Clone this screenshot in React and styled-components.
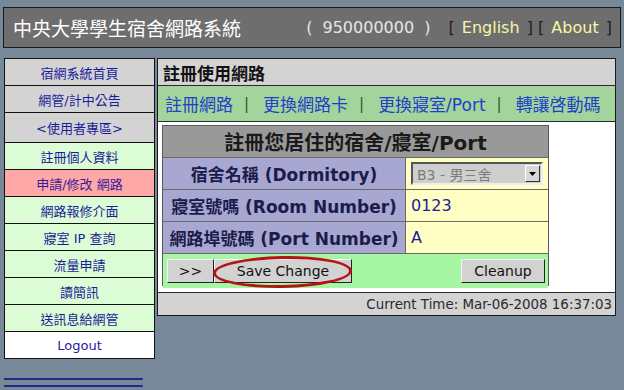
import React from "react";
import styled, { createGlobalStyle } from "styled-components";

const GlobalStyle = createGlobalStyle`
  body {
    margin: 0;
    background: #778899;
    font-family: "DejaVu Sans", "Noto Sans CJK TC", sans-serif;
  }
`;

const Page = styled.div`
  width: 624px;
  height: 390px;
  padding: 7px 3px 0 3px;
  box-sizing: border-box;
  overflow: hidden;
`;

const Header = styled.div`
  height: 41px;
  box-sizing: border-box;
  background: #6e6e6e;
  border: 1px solid #1a1a1a;
  display: flex;
  align-items: center;
  justify-content: space-between;
  padding: 0 8px 0 9px;
`;

const SiteTitle = styled.div`
  color: #ffffff;
  font-size: 19px;
`;

const HeaderRight = styled.div`
  display: flex;
  align-items: center;
  gap: 18px;
  font-size: 16px;
`;

const UserId = styled.span`
  color: #e6e6e6;
  word-spacing: 5px;
`;

const Bracket = styled.span`
  color: #1e1e1e;
`;

const TopLink = styled.span`
  color: #f6f6a8;
  margin: 0 2px;
`;

const Body = styled.div`
  display: flex;
  align-items: flex-start;
  gap: 2px;
  margin-top: 10px;
  margin-left: 1px;
`;

const SideColumn = styled.div`
  width: 151px;
  display: flex;
  flex-direction: column;
`;

const Sidebar = styled.div`
  border: 1px solid #111;
  border-bottom: none;
  background: #fff;
`;

const SideItem = styled.div`
  height: ${(p) => (p.tall ? 29 : 26)}px;
  border-bottom: 1px solid #111;
  background: ${(p) => p.bg};
  color: ${(p) => p.color || "#1c1c9a"};
  font-size: 13px;
  display: flex;
  align-items: center;
  justify-content: center;
`;

const Rule = styled.div`
  width: 139px;
  height: 2px;
  background: #1c2c8c;
  border-radius: 0 2px 2px 0;
  margin-top: ${(p) => p.top}px;
`;

const Main = styled.div`
  width: 459px;
  box-sizing: border-box;
  border: 1px solid #1a1a1a;
  background: #fff;
  display: flex;
  flex-direction: column;
`;

const PanelTitle = styled.div`
  height: 26px;
  background: #d3d3d3;
  border-bottom: 1px solid #2a2a2a;
  font-size: 17px;
  font-weight: bold;
  color: #111;
  display: flex;
  align-items: center;
  padding-left: 5px;
`;

const Nav = styled.div`
  height: 35px;
  background: #a3d49c;
  border-bottom: 1px solid #2a2a2a;
  display: flex;
  align-items: center;
  padding-left: 7px;
  font-size: 17px;
`;

const NavLink = styled.span`
  color: #2040c8;
`;

const Sep = styled.span`
  color: #2c5a2c;
  font-size: 15px;
  margin: 0 14px 0 11px;
`;

const Content = styled.div`
  height: 170px;
  padding: 3px 4px;
  box-sizing: border-box;
`;

const Form = styled.div`
  display: grid;
  grid-template-columns: 242px 142px;
  grid-auto-rows: 31px;
  gap: 1px;
  width: 387px;
  box-sizing: border-box;
  border: 1px solid #5a5a5a;
  background: #6a6a6a;
`;

const FormHead = styled.div`
  grid-column: 1 / 3;
  background: #999999;
  color: #1a1a1a;
  font-size: 20px;
  font-weight: bold;
  display: flex;
  align-items: center;
  justify-content: center;
`;

const Label = styled.div`
  background: #a7a7d2;
  color: #1c1c4a;
  font-size: 17px;
  font-weight: bold;
  display: flex;
  align-items: center;
  justify-content: center;
  white-space: nowrap;
`;

const Value = styled.div`
  background: #ffffc4;
  color: #1c1c9a;
  font-size: 16px;
  display: flex;
  align-items: center;
  padding-left: 5px;
`;

const Select = styled.div`
  width: 132px;
  height: 23px;
  box-sizing: border-box;
  border: 2px solid;
  border-color: #555 #eee #eee #555;
  background: #cfcfcf;
  color: #7c7c7c;
  font-size: 14px;
  display: flex;
  align-items: center;
  justify-content: space-between;
  padding-left: 4px;
`;

const SelectArrow = styled.div`
  width: 15px;
  height: 17px;
  box-sizing: border-box;
  background: #d8d8d8;
  border: 1px solid;
  border-color: #fff #333 #333 #fff;
  display: flex;
  align-items: center;
  justify-content: center;
  margin-right: 1px;
`;

const ButtonRow = styled.div`
  grid-column: 1 / 3;
  height: 34px;
  background: #a6f6a4;
  display: flex;
  align-items: center;
  padding: 0 3px 0 4px;
`;

const Button = styled.div`
  position: relative;
  height: 24px;
  width: ${(p) => p.w}px;
  box-sizing: border-box;
  background: #d2d2d2;
  border: 1px solid;
  border-color: #f4f4f4 #222 #222 #f4f4f4;
  color: #111;
  font-size: 14px;
  display: flex;
  align-items: center;
  justify-content: center;
  margin-left: ${(p) => (p.right ? "auto" : "0")};
`;

const Circle = styled.span`
  position: absolute;
  top: -4px;
  bottom: -6px;
  left: -2px;
  right: -1px;
  border: 3px solid #b41414;
  border-radius: 50%;
  transform: rotate(-1deg);
`;

const Footer = styled.div`
  height: 22px;
  border-top: 1px solid #2a2a2a;
  background: #d3d3d3;
  color: #2a2a2a;
  font-size: 13.4px;
  display: flex;
  align-items: center;
  justify-content: flex-end;
  padding-right: 3px;
`;

const sideItems = [
  { text: "宿網系統首頁", bg: "#d3d3d3" },
  { text: "網管/計中公告", bg: "#d3d3d3" },
  { text: "<使用者專區>", bg: "#d3d3d3", tall: true },
  { text: "註冊個人資料", bg: "#dbfcd4" },
  { text: "申請/修改 網路", bg: "#ffa8a8", color: "#3a1a9a" },
  { text: "網路報修介面", bg: "#dbfcd4" },
  { text: "寢室 IP 查詢", bg: "#dbfcd4" },
  { text: "流量申請", bg: "#dbfcd4" },
  { text: "讀簡訊", bg: "#dbfcd4" },
  { text: "送訊息給網管", bg: "#dbfcd4" },
  { text: "Logout", bg: "#ffffff", color: "#2a1a9a" },
];

const navLinks = ["註冊網路", "更換網路卡", "更換寢室/Port", "轉讓啓動碼"];

const App = () => {
  return (
    <Page>
      <GlobalStyle />
      <Header>
        <SiteTitle>中央大學學生宿舍網路系統</SiteTitle>
        <HeaderRight>
          <UserId>( 950000000 )</UserId>
          <span>
            <Bracket>[</Bracket> <TopLink>English</TopLink>{" "}
            <Bracket>]</Bracket> <Bracket>[</Bracket>{" "}
            <TopLink>About</TopLink> <Bracket>]</Bracket>
          </span>
        </HeaderRight>
      </Header>
      <Body>
        <SideColumn>
          <Sidebar>
            {sideItems.map((item) => (
              <SideItem
                key={item.text}
                bg={item.bg}
                color={item.color}
                tall={item.tall}
              >
                {item.text}
              </SideItem>
            ))}
          </Sidebar>
          <Rule top={19} />
          <Rule top={5} />
        </SideColumn>
        <Main>
          <PanelTitle>註冊使用網路</PanelTitle>
          <Nav>
            {navLinks.map((link, i) => (
              <React.Fragment key={link}>
                {i > 0 && <Sep>|</Sep>}
                <NavLink>{link}</NavLink>
              </React.Fragment>
            ))}
          </Nav>
          <Content>
            <Form>
              <FormHead>註冊您居住的宿舍/寢室/Port</FormHead>
              <Label>宿舍名稱 (Dormitory)</Label>
              <Value>
                <Select>
                  <span>B3 - 男三舍</span>
                  <SelectArrow>
                    <svg width="7" height="4" viewBox="0 0 7 4">
                      <path d="M0 0h7L3.5 4z" fill="#000" />
                    </svg>
                  </SelectArrow>
                </Select>
              </Value>
              <Label>寢室號嗎 (Room Number)</Label>
              <Value>0123</Value>
              <Label>網路埠號碼 (Port Number)</Label>
              <Value>A</Value>
              <ButtonRow>
                <Button w={47}>&gt;&gt;</Button>
                <Button w={138}>
                  Save Change
                  <Circle />
                </Button>
                <Button w={84} right>
                  Cleanup
                </Button>
              </ButtonRow>
            </Form>
          </Content>
          <Footer>Current Time: Mar-06-2008 16:37:03</Footer>
        </Main>
      </Body>
    </Page>
  );
};

export default App;
